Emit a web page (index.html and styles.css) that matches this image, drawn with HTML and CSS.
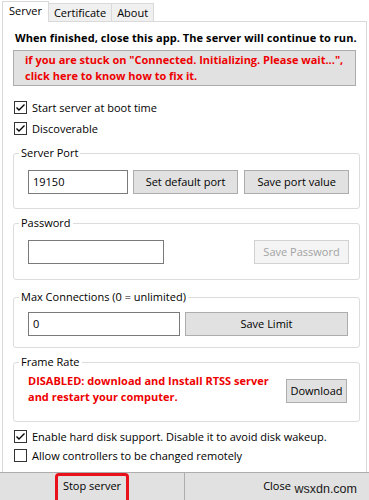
FILE: index.html
```html
<!DOCTYPE html>
<html>
<head>
<meta charset="utf-8">
<link rel="stylesheet" href="styles.css">
</head>
<body>
<div class="window">
  <div class="tabs">
    <div class="tab active">Server</div>
    <div class="tab">Certificate</div>
    <div class="tab">About</div>
  </div>
  <div class="panel">
    <p class="notice">When finished, close this app. The server will continue to run.</p>
    <div class="alert">if you are stuck on "Connected. Initializing. Please wait...",<br>click here to know how to fix it.</div>
    <label class="check first"><span class="box"><svg width="11" height="11" viewBox="0 0 11 11"><polyline points="1.5,5.5 4,8 9.5,2.5" fill="none" stroke="#000" stroke-width="1.4"/></svg></span>Start server at boot time</label>
    <label class="check"><span class="box"><svg width="11" height="11" viewBox="0 0 11 11"><polyline points="1.5,5.5 4,8 9.5,2.5" fill="none" stroke="#000" stroke-width="1.4"/></svg></span>Discoverable</label>

    <fieldset class="group g-port">
      <legend>Server Port</legend>
      <div class="row">
        <div class="input w-port">19150</div>
        <button class="btn w-default">Set default port</button>
        <button class="btn w-saveport">Save port value</button>
      </div>
    </fieldset>

    <fieldset class="group g-pass">
      <legend>Password</legend>
      <div class="row spread">
        <div class="input w-pass"></div>
        <button class="btn disabled w-savepass">Save Password</button>
      </div>
    </fieldset>

    <fieldset class="group g-max">
      <legend>Max Connections (0 = unlimited)</legend>
      <div class="row">
        <div class="input w-max">0</div>
        <button class="btn w-limit">Save Limit</button>
      </div>
    </fieldset>

    <fieldset class="group g-frame">
      <legend>Frame Rate</legend>
      <div class="row spread frame-row">
        <div class="warn">DISABLED: download and Install RTSS server<br>and restart your computer.</div>
        <button class="btn w-download">Download</button>
      </div>
    </fieldset>

    <label class="check small first-small"><span class="box"><svg width="11" height="11" viewBox="0 0 11 11"><polyline points="1.5,5.5 4,8 9.5,2.5" fill="none" stroke="#000" stroke-width="1.4"/></svg></span>Enable hard disk support. Disable it to avoid disk wakeup.</label>
    <label class="check small"><span class="box"></span>Allow controllers to be changed remotely</label>
  </div>
  <div class="bottombar">
    <button class="barbtn"><span class="highlight">Stop server</span></button>
    <button class="barbtn close">Close<span class="watermark">wsxdn.com</span></button>
  </div>
</div>
</body>
</html>
```

FILE: styles.css
```css
* { box-sizing: border-box; }
html, body {
  margin: 0;
  padding: 0;
  background: #fff;
}
body {
  font-family: "Open Sans", "Noto Sans", sans-serif;
  font-size: 11px;
  line-height: 16px;
  color: #000;
}
.window {
  width: 369px;
  height: 500px;
  display: flex;
  flex-direction: column;
  overflow: hidden;
}
.tabs {
  height: 21px;
  display: flex;
  align-items: flex-end;
  padding-left: 2px;
  flex: none;
}
.tab {
  height: 18px;
  line-height: 17px;
  padding: 0 5px;
  background: #f0f0f0;
  border: 1px solid #d9d9d9;
  border-bottom: none;
  margin-left: -1px;
}
.tab:first-child { margin-left: 0; }
.tab.active {
  line-height: 18px;
  background: #fff;
  position: relative;
  z-index: 1;
  margin-bottom: -1px;
  height: 21px;
  padding: 0 6px;
}
.panel {
  flex: 1;
  margin: 0 2px;
  border: 1px solid #d9d9d9;
  border-bottom: none;
  padding: 8px 6px 0 10px;
  background: #fff;
}
.notice {
  margin: 0;
  padding-left: 2px;
  font-weight: bold;
  white-space: nowrap;
  letter-spacing: 0.07px;
}
.alert {
  margin: 4px 4px 0 0;
  border: 1px solid #adadad;
  background: #e1e1e1;
  padding: 1px 0 1px 11px;
  color: #ee0000;
  font-weight: bold;
}
.check {
  display: flex;
  align-items: center;
  height: 21px;
  white-space: nowrap;
}
.check.first { margin-top: 11px; }
.check.small { height: 19px; }
.check.first-small { margin-top: 5px; }
.box {
  width: 13px;
  height: 13px;
  border: 1px solid #333;
  background: #fff;
  margin: 0 5px 0 1px;
  display: flex;
  align-items: center;
  justify-content: center;
  flex: none;
}
.group {
  margin: 6px 0 0 0;
  border: 1px solid #dcdcdc;
  border-radius: 3px;
  padding: 9px 10px 14px 14px;
  min-width: 0;
}
.group legend {
  padding: 0 2px;
  margin-left: -9px;
  line-height: 16px;
}
.g-pass { padding-bottom: 15px; }
.g-max { margin-top: 9px; padding-top: 7px; padding-bottom: 11px; }
.g-frame { padding-top: 3px; padding-bottom: 16px; padding-right: 12px; }
.row {
  display: flex;
  align-items: center;
}
.row.spread { justify-content: space-between; }
.input {
  height: 24px;
  border: 1px solid #7a7a7a;
  background: #fff;
  padding: 0 4px;
  line-height: 22px;
}
.btn {
  height: 24px;
  border: 1px solid #adadad;
  background: #e1e1e1;
  font: inherit;
  color: #000;
  padding: 0;
  margin: 0;
  text-align: center;
}
.btn.disabled {
  background: #f4f4f4;
  border-color: #d2d2d2;
  color: #a3a3a3;
}
.w-port { width: 100px; }
.w-default { width: 106px; margin-left: 5px; }
.w-saveport { width: 105px; margin-left: 6px; }
.w-pass { width: 136px; }
.w-savepass { width: 95px; }
.w-max { width: 152px; }
.w-limit { width: 163px; margin-left: 5px; }
.w-download { width: 61px; margin-top: 6px; }
.frame-row { align-items: flex-start; }
.warn {
  color: #ee0000;
  font-weight: bold;
  white-space: nowrap;
}
.bottombar {
  height: 28px;
  flex: none;
  display: flex;
  background: #e1e1e1;
  border-top: 1px solid #adadad;
}
.barbtn {
  flex: 1;
  border: none;
  background: transparent;
  font: inherit;
  color: #000;
  padding: 0;
  margin: 0;
  display: flex;
  justify-content: center;
  align-items: flex-start;
  overflow: visible;
}
.barbtn.close {
  border-left: 1px solid #adadad;
  position: relative;
  padding-top: 5px;
}
.highlight {
  display: inline-block;
  border: 3px solid #e8101a;
  border-radius: 4px;
  padding: 2px 5px 10px;
  margin-top: 0;
}
.watermark {
  position: absolute;
  right: 12px;
  top: 8px;
  font-family: "Liberation Sans", Arial, sans-serif;
  font-size: 12.5px;
  color: #1a1a1a;
}
```
